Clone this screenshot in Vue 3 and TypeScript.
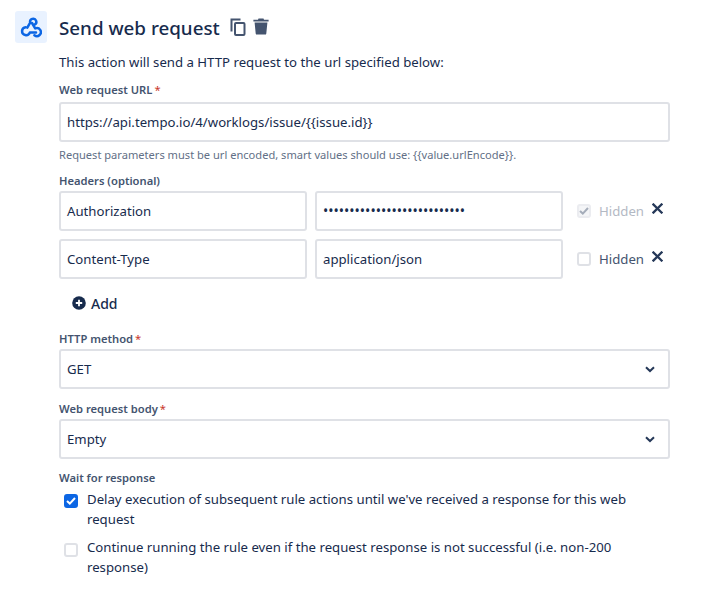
<script setup lang="ts">
interface Header { name: string; value: string; hidden: boolean }
const headers: Header[] = [
  { name: 'Authorization', value: '•••••••••••••••••••••••••••', hidden: true },
  { name: 'Content-Type', value: 'application/json', hidden: false },
]
</script>

<template>
  <div class="page">
    <div class="icon-box">
      <svg width="22" height="22" viewBox="0 0 22 22" fill="none" stroke="#0C66E4" stroke-width="2.5" stroke-linecap="round" stroke-linejoin="round">
        <path d="M7.3 11.6 L10.2 6.6 A3.1 3.1 0 1 1 14.6 8.6" />
        <path d="M5.7 11.2 A4 4 0 1 0 9.8 16.6 H16" />
        <path d="M12 7 L15.2 12.4 A4 4 0 1 1 14.4 19.2" />
      </svg>
    </div>
    <div class="content">
      <div class="title-row">
        <h1 class="title">Send web request</h1>
        <svg class="copy" width="16" height="18" viewBox="0 0 16 18" fill="none" stroke="#44546F" stroke-width="2">
          <path d="M1.5 13.5 V1.5 H10.5" />
          <rect x="5" y="5" width="9.5" height="12" rx="1" />
        </svg>
        <svg class="trash" width="16" height="17" viewBox="0 0 16 17" fill="#44546F">
          <path d="M5.5 0.6 H10.5 L11 1.8 H15.6 V3.4 H0.4 V1.8 H5 Z" />
          <path d="M1.6 4.6 H14.4 L13.3 15.4 Q13.2 16.6 12 16.6 H4 Q2.8 16.6 2.7 15.4 Z" />
        </svg>
      </div>
      <p class="desc">This action will send a HTTP request to the url specified below:</p>

      <label class="label first">Web request URL<span class="req">*</span></label>
      <div class="field">https://api.tempo.io/4/worklogs/issue/{{ '{{' }}issue.id}}</div>
      <p class="help">Request parameters must be url encoded, smart values should use: {{ '{{' }}value.urlEncode}}.</p>

      <label class="label headers-label">Headers (optional)</label>
      <div class="rows">
        <div v-for="h in headers" :key="h.name" class="row">
          <div class="field half">{{ h.name }}</div>
          <div class="field half" :class="{ secret: h.hidden }">{{ h.value }}</div>
          <div class="hidden-opt" :class="{ disabled: h.hidden }">
            <span class="box">
              <svg v-if="h.hidden" width="10" height="8" viewBox="0 0 10 8" fill="none" stroke="#A5ADBA" stroke-width="2"><path d="M1 4 L3.8 6.6 L9 1" /></svg>
            </span>
            <span>Hidden</span>
          </div>
          <svg class="close" width="11" height="11" viewBox="0 0 11 11" stroke="#253858" stroke-width="2.3" stroke-linecap="square"><path d="M1.5 1.5 L9.5 9.5 M9.5 1.5 L1.5 9.5" /></svg>
        </div>
      </div>

      <div class="add">
        <svg width="14" height="14" viewBox="0 0 14 14"><circle cx="7" cy="7" r="6.8" fill="#172B4D" /><path d="M7 3.8 V10.2 M3.8 7 H10.2" stroke="#fff" stroke-width="1.8" /></svg>
        <span>Add</span>
      </div>

      <label class="label method-label">HTTP method<span class="req">*</span></label>
      <div class="field select">
        <span>GET</span>
        <svg width="10" height="7" viewBox="0 0 10 7" fill="none" stroke="#253858" stroke-width="2"><path d="M1 1.2 L5 5 L9 1.2" /></svg>
      </div>

      <label class="label body-label">Web request body<span class="req">*</span></label>
      <div class="field select">
        <span>Empty</span>
        <svg width="10" height="7" viewBox="0 0 10 7" fill="none" stroke="#253858" stroke-width="2"><path d="M1 1.2 L5 5 L9 1.2" /></svg>
      </div>

      <label class="label wait-label">Wait for response</label>
      <div class="check-line first-check">
        <span class="box checked">
          <svg width="10" height="8" viewBox="0 0 10 8" fill="none" stroke="#fff" stroke-width="2"><path d="M1 4 L3.8 6.6 L9 1" /></svg>
        </span>
        <span class="check-text">Delay execution of subsequent rule actions until we've received a response for this web request</span>
      </div>
      <div class="check-line second-check">
        <span class="box"></span>
        <span class="check-text">Continue running the rule even if the request response is not successful (i.e. non-200 response)</span>
      </div>
    </div>
  </div>
</template>

<style>
html, body { background: #fff; }
</style>

<style scoped>
.page {
  display: flex;
  align-items: flex-start;
  gap: 12px;
  width: 727px;
  height: 600px;
  box-sizing: border-box;
  padding: 11px 0 0 15px;
  overflow: hidden;
  font-family: "Noto Sans", "Open Sans", sans-serif;
  font-size: 13.2px;
  color: #172B4D;
}
.icon-box {
  width: 32px;
  height: 32px;
  flex: none;
  display: flex;
  align-items: center;
  justify-content: center;
  border-radius: 3px;
  background: #E9F2FF;
}
.content { width: 611px; }
.title-row { display: flex; align-items: center; height: 34px; }
.title { margin: 0; font-size: 18.8px; font-weight: 500; line-height: 34px; }
.copy { margin-left: 10px; margin-top: -2px; }
.trash { margin-left: 7px; margin-top: -3px; }
.desc { margin: 7px 0 0; line-height: 20px; }
.label { display: block; font-size: 11.2px; font-weight: 600; line-height: 16px; color: #44546F; }
.req { color: #C9372C; margin-left: 2px; font-weight: 400; }
.first { margin-top: 10px; }
.field {
  box-sizing: border-box;
  height: 40px;
  display: flex;
  align-items: center;
  padding: 0 6px;
  border: 2px solid #DFE1E6;
  border-radius: 3px;
  background: #fff;
  line-height: 20px;
  white-space: nowrap;
}
.first + .field { margin-top: 4px; }
.help { margin: 5px 0 0; font-size: 11.1px; line-height: 16px; color: #626F86; }
.headers-label { margin-top: 10px; }
.rows { display: flex; flex-direction: column; gap: 8px; margin-top: 2px; }
.row { display: flex; align-items: center; gap: 8px; }
.half { width: 248px; flex: none; }
.secret { font-size: 14px; }
.hidden-opt { display: flex; align-items: center; gap: 8px; margin-left: 6px; color: #44546F; }
.hidden-opt.disabled { color: #B3B9C4; }
.box {
  box-sizing: border-box;
  width: 14px;
  height: 14px;
  flex: none;
  display: flex;
  align-items: center;
  justify-content: center;
  border: 2px solid #DFE1E6;
  border-radius: 3px;
  background: #fff;
}
.disabled .box { background: #F4F5F7; border-color: #EBECF0; }
.box.checked { background: #0C66E4; border-color: #0C66E4; }
.close { margin-top: -5px; }
.add { display: flex; align-items: center; gap: 5px; margin: 14px 0 0 13px; height: 20px; font-size: 14px; font-weight: 500; }
.method-label { margin-top: 18px; }
.method-label + .field, .body-label + .field { margin-top: 2px; }
.select { justify-content: space-between; padding-right: 13px; }
.body-label { margin-top: 12px; }
.wait-label { margin-top: 11px; }
.check-line { display: flex; align-items: flex-start; gap: 9px; padding-left: 5px; }
.first-check .box { margin-top: 5px; }
.second-check .box { margin-top: 6px; }
.first-check { margin-top: 3px; }
.second-check { margin-top: 8px; }
.check-text { width: 545px; line-height: 20px; }
</style>
